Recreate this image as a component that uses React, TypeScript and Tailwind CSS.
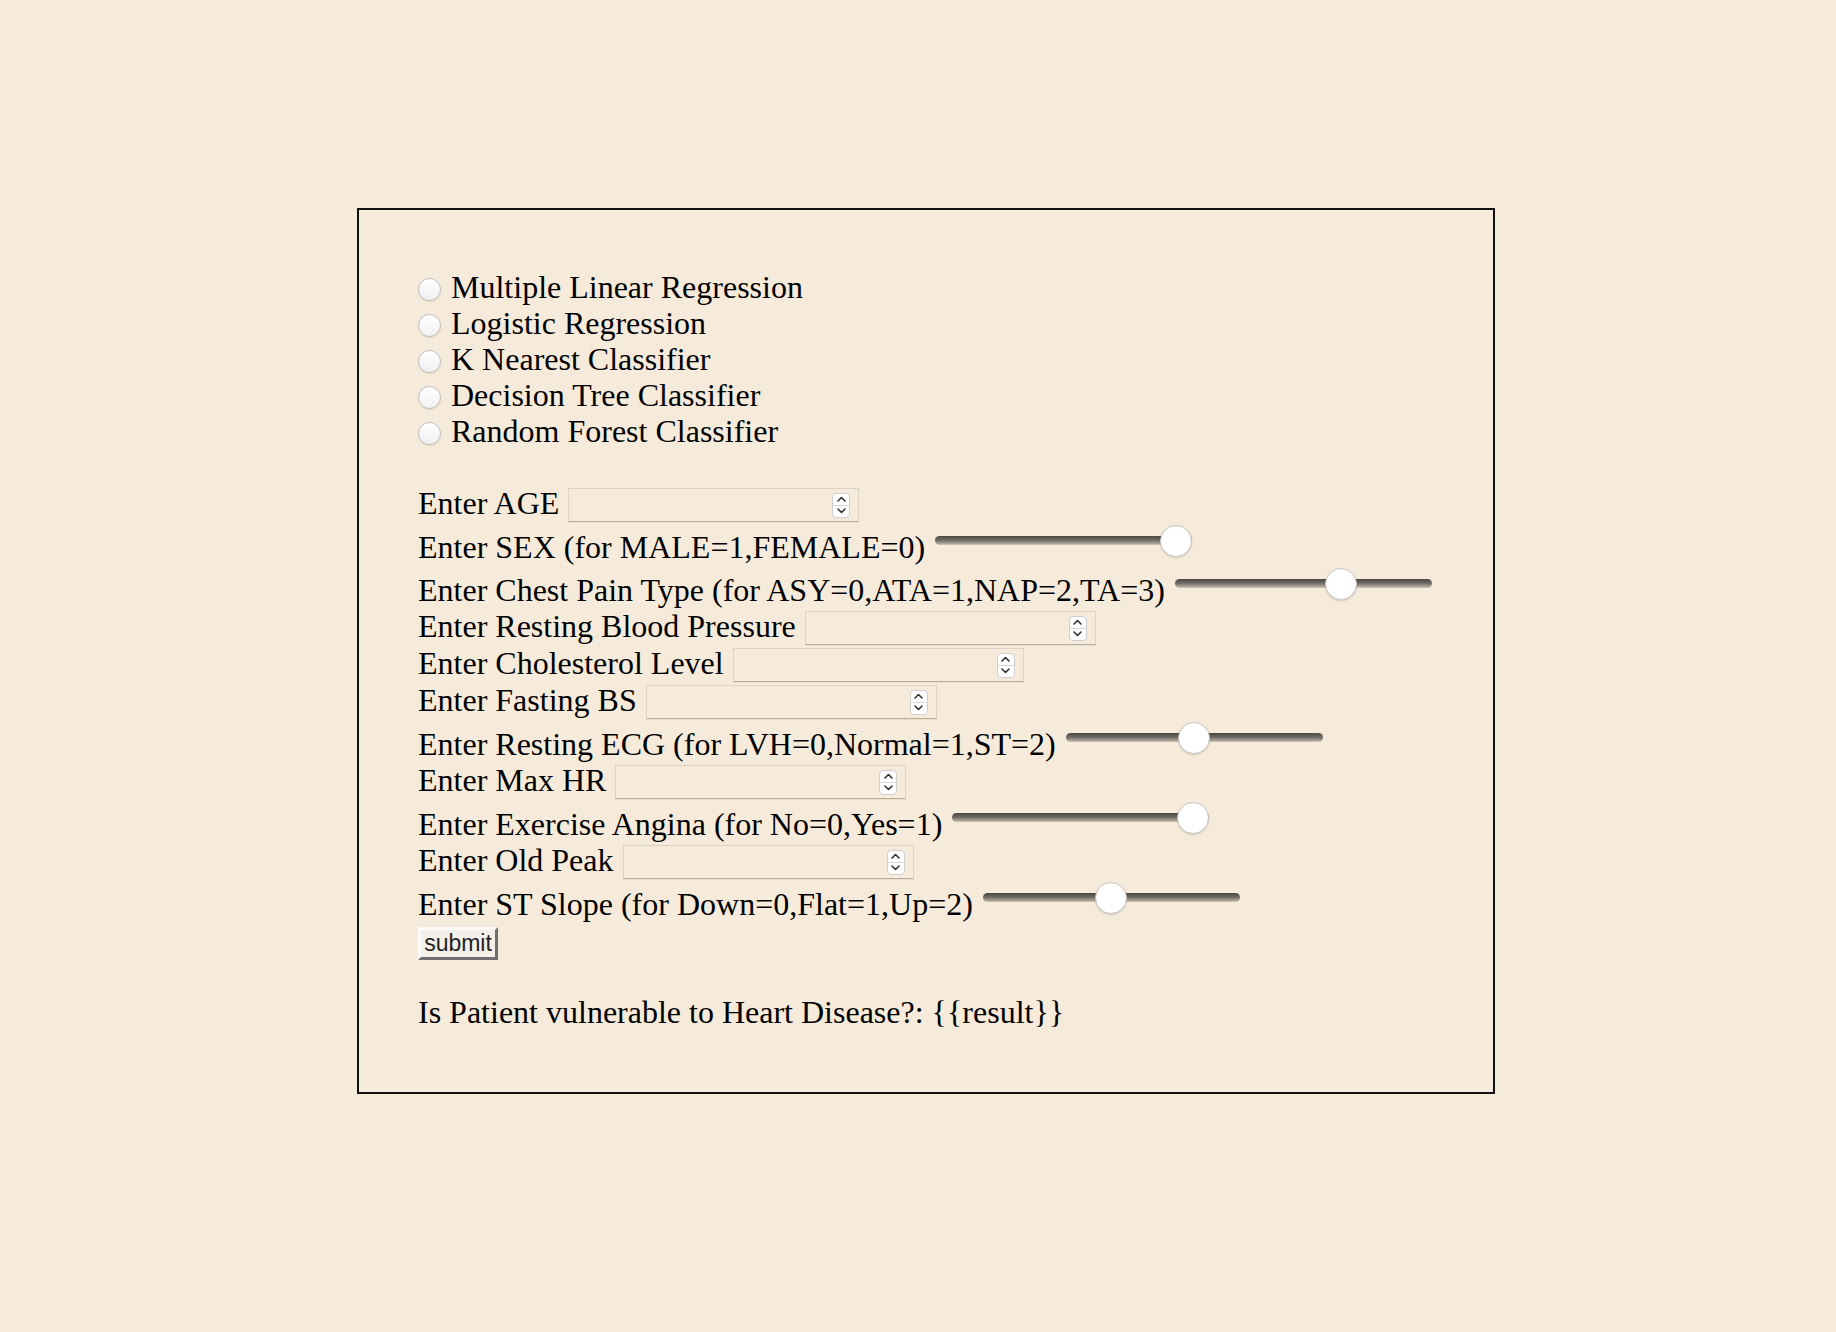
import React from 'react';

const models = [
    'Multiple Linear Regression',
    'Logistic Regression',
    'K Nearest Classifier',
    'Decision Tree Classifier',
    'Random Forest Classifier',
];

type Field =
    | { kind: 'number'; label: string }
    | { kind: 'range'; label: string; value: number; max: number };

const fields: Field[] = [
    { kind: 'number', label: 'Enter AGE' },
    { kind: 'range', label: 'Enter SEX (for MALE=1,FEMALE=0)', value: 1, max: 1 },
    { kind: 'range', label: 'Enter Chest Pain Type (for ASY=0,ATA=1,NAP=2,TA=3)', value: 2, max: 3 },
    { kind: 'number', label: 'Enter Resting Blood Pressure' },
    { kind: 'number', label: 'Enter Cholesterol Level' },
    { kind: 'number', label: 'Enter Fasting BS' },
    { kind: 'range', label: 'Enter Resting ECG (for LVH=0,Normal=1,ST=2)', value: 1, max: 2 },
    { kind: 'number', label: 'Enter Max HR' },
    { kind: 'range', label: 'Enter Exercise Angina (for No=0,Yes=1)', value: 1, max: 1 },
    { kind: 'number', label: 'Enter Old Peak' },
    { kind: 'range', label: 'Enter ST Slope (for Down=0,Flat=1,Up=2)', value: 1, max: 2 },
];

function Radio({ label }: { label: string }) {
    return (
        <label className="flex h-[36px] items-center">
            <span className="mt-[4px] h-[23px] w-[23px] shrink-0 rounded-full border border-[#bdbdbd] bg-[linear-gradient(to_bottom,#ffffff,#f1f1f1)] shadow-[0_1px_1px_rgba(0,0,0,0.08)]" />
            <span className="ml-[10px] leading-[36px]">{label}</span>
        </label>
    );
}

function Spinner() {
    return (
        <div className="flex h-[25px] w-[18px] flex-col overflow-hidden rounded-[4px] border border-[#cfcfcf] bg-white">
            <div className="flex flex-1 items-center justify-center border-b border-[#d8d8d8]">
                <svg width="9" height="6" viewBox="0 0 9 6">
                    <path d="M1 5 L4.5 1.5 L8 5" fill="none" stroke="#333" strokeWidth="1.6" strokeLinecap="round" strokeLinejoin="round" />
                </svg>
            </div>
            <div className="flex flex-1 items-center justify-center">
                <svg width="9" height="6" viewBox="0 0 9 6">
                    <path d="M1 1 L4.5 4.5 L8 1" fill="none" stroke="#333" strokeWidth="1.6" strokeLinecap="round" strokeLinejoin="round" />
                </svg>
            </div>
        </div>
    );
}

function NumberRow({ label }: { label: string }) {
    return (
        <div className="flex h-[37px] items-start">
            <span className="whitespace-nowrap leading-[36px]">{label}</span>
            <div className="ml-[9px] mt-[3px] flex h-[34px] w-[291px] items-center justify-end border border-[#ddd3c4] border-b-[#b8ac9b] pr-[8px] shadow-[0_1px_0_rgba(0,0,0,0.05)]">
                <Spinner />
            </div>
        </div>
    );
}

function RangeRow({ label, value, max }: { label: string; value: number; max: number }) {
    const left = (value / max) * 225;
    return (
        <div className="flex h-[43px] items-start">
            <span className="mt-[7px] whitespace-nowrap leading-[36px]">{label}</span>
            <div className="relative ml-[10px] mt-[3px] h-[32px] w-[257px] shrink-0">
                <div className="absolute left-0 right-0 top-[11px] h-[9px] rounded-full bg-[linear-gradient(to_bottom,#4a4744,#6d6963_45%,#a59d92_80%,#d2c8ba)]" />
                <div
                    className="absolute top-0 h-[32px] w-[32px] rounded-full border border-[#c9c6c1] bg-white shadow-[0_1px_2px_rgba(0,0,0,0.15)]"
                    style={{ left }}
                />
            </div>
        </div>
    );
}

export default function App() {
    return (
        <div className="min-h-screen w-full bg-[#f6ebda] pt-[208px] font-['Liberation_Serif','Times_New_Roman',serif] text-[32px] text-black">
            <div className="ml-[357px] w-[1138px] border-2 border-[#111] pb-[62px] pl-[59px] pt-[59px]">
                <div className="flex flex-col">
                    {models.map((m) => (
                        <Radio key={m} label={m} />
                    ))}
                </div>
                <div className="h-[36px]" />
                <div className="flex flex-col">
                    {fields.map((f) =>
                        f.kind === 'number' ? (
                            <NumberRow key={f.label} label={f.label} />
                        ) : (
                            <RangeRow key={f.label} label={f.label} value={f.value} max={f.max} />
                        ),
                    )}
                </div>
                <button
                    type="button"
                    className="mt-[5px] flex h-[33px] w-[80px] items-center justify-center border-[3px] border-l-[#fbfaf8] border-t-[#fbfaf8] border-r-[#6f6f6f] border-b-[#6f6f6f] bg-[#f3efe9] px-[2px] font-['Liberation_Sans',Arial,sans-serif] text-[23px] leading-none text-[#222]"
                >
                    submit
                </button>
                <p className="mt-[34px] leading-[36px]">Is Patient vulnerable to Heart Disease?: {'{{result}}'}</p>
            </div>
        </div>
    );
}
